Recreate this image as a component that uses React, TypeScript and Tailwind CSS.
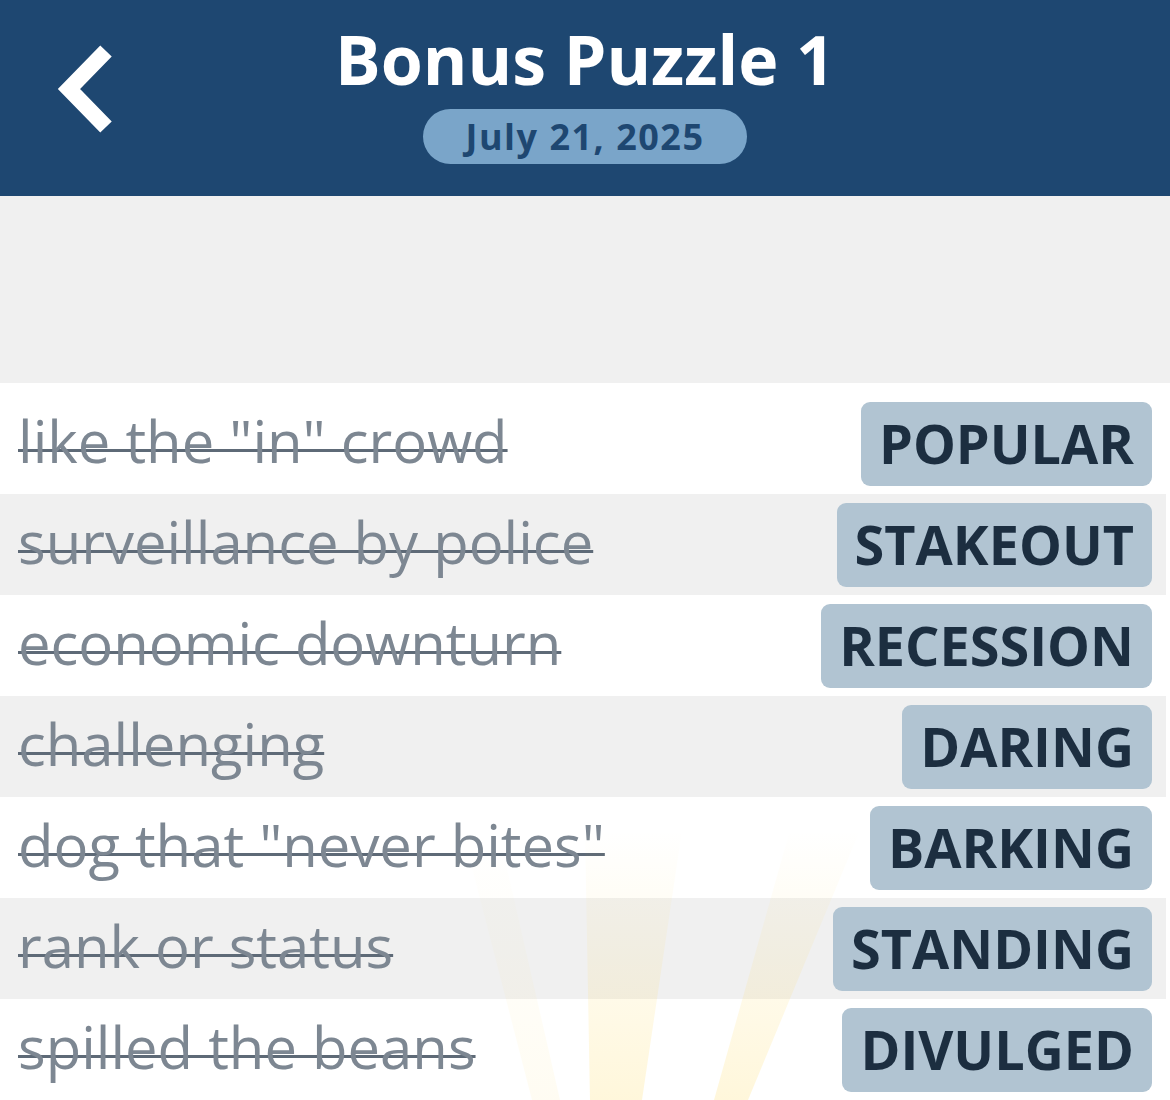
const clues = [
  { clue: 'like the "in" crowd', answer: 'POPULAR' },
  { clue: 'surveillance by police', answer: 'STAKEOUT' },
  { clue: 'economic downturn', answer: 'RECESSION' },
  { clue: 'challenging', answer: 'DARING' },
  { clue: 'dog that "never bites"', answer: 'BARKING' },
  { clue: 'rank or status', answer: 'STANDING' },
  { clue: 'spilled the beans', answer: 'DIVULGED' },
];

function BackChevron() {
  return (
    <svg width="70" height="94" viewBox="0 0 70 94" fill="none">
      <path d="M54 8 L17 46 L54 84" stroke="white" strokeWidth="16" strokeLinejoin="miter" />
    </svg>
  );
}

function Rays() {
  return (
    <svg
      className="pointer-events-none absolute inset-0"
      width="1170"
      height="1100"
      viewBox="0 0 1170 1100"
    >
      <defs>
        <linearGradient id="ray" gradientUnits="userSpaceOnUse" x1="0" y1="830" x2="0" y2="1100">
          <stop offset="0" stopColor="#ffd54a" stopOpacity="0" />
          <stop offset="0.35" stopColor="#ffd54a" stopOpacity="0.07" />
          <stop offset="1" stopColor="#ffd54a" stopOpacity="0.2" />
        </linearGradient>
      </defs>
      <polygon points="585,830 682,830 642,1100 590,1100" fill="url(#ray)" />
      <polygon points="790,830 860,830 748,1100 714,1100" fill="url(#ray)" />
      <polygon points="470,860 505,860 560,1100 532,1100" fill="url(#ray)" opacity="0.35" />
    </svg>
  );
}

export default function App() {
  return (
    <div
      className="relative w-[1170px] h-[1100px] overflow-hidden bg-white"
      style={{ fontFamily: '"Open Sans", "Noto Sans", sans-serif' }}
    >
      <header className="h-[196px] bg-[#1e4771] flex">
        <div className="w-[150px] flex pl-[52px] pt-[43px]">
          <BackChevron />
        </div>
        <div className="flex-1 flex flex-col items-center pt-[18px]">
          <h1 className="text-[68px] leading-[82px] font-bold text-white">Bonus Puzzle 1</h1>
          <div className="mt-[9px] h-[55px] px-[42px] rounded-full bg-[#7aa5c9] flex items-center">
            <span className="text-[36px] font-bold text-[#1e4771] tracking-[1.5px]">July 21, 2025</span>
          </div>
        </div>
        <div className="w-[150px]" />
      </header>

      <div className="h-[187px] bg-[#f0f0f0]" />

      <div className="pt-[10px] bg-white">
        {clues.map((c, i) => (
          <div
            key={c.answer}
            className={`w-[1166px] h-[101px] flex items-center justify-between pl-[18px] pr-[14px] ${
              i % 2 === 0 ? 'bg-white' : 'bg-[#f0f0f0]'
            }`}
          >
            <span className="text-[58px] leading-none text-[#7d8792] underline underline-offset-[-14px] decoration-[#5e6a77] decoration-[3px] [text-decoration-skip-ink:none] pb-[6px]">
              {c.clue}
            </span>
            <span className="h-[84px] px-[18px] flex items-center rounded-[9px] bg-[#b1c4d2] text-[54px] font-bold text-[#1c2e40]">
              {c.answer}
            </span>
          </div>
        ))}
      </div>

      <Rays />
    </div>
  );
}
